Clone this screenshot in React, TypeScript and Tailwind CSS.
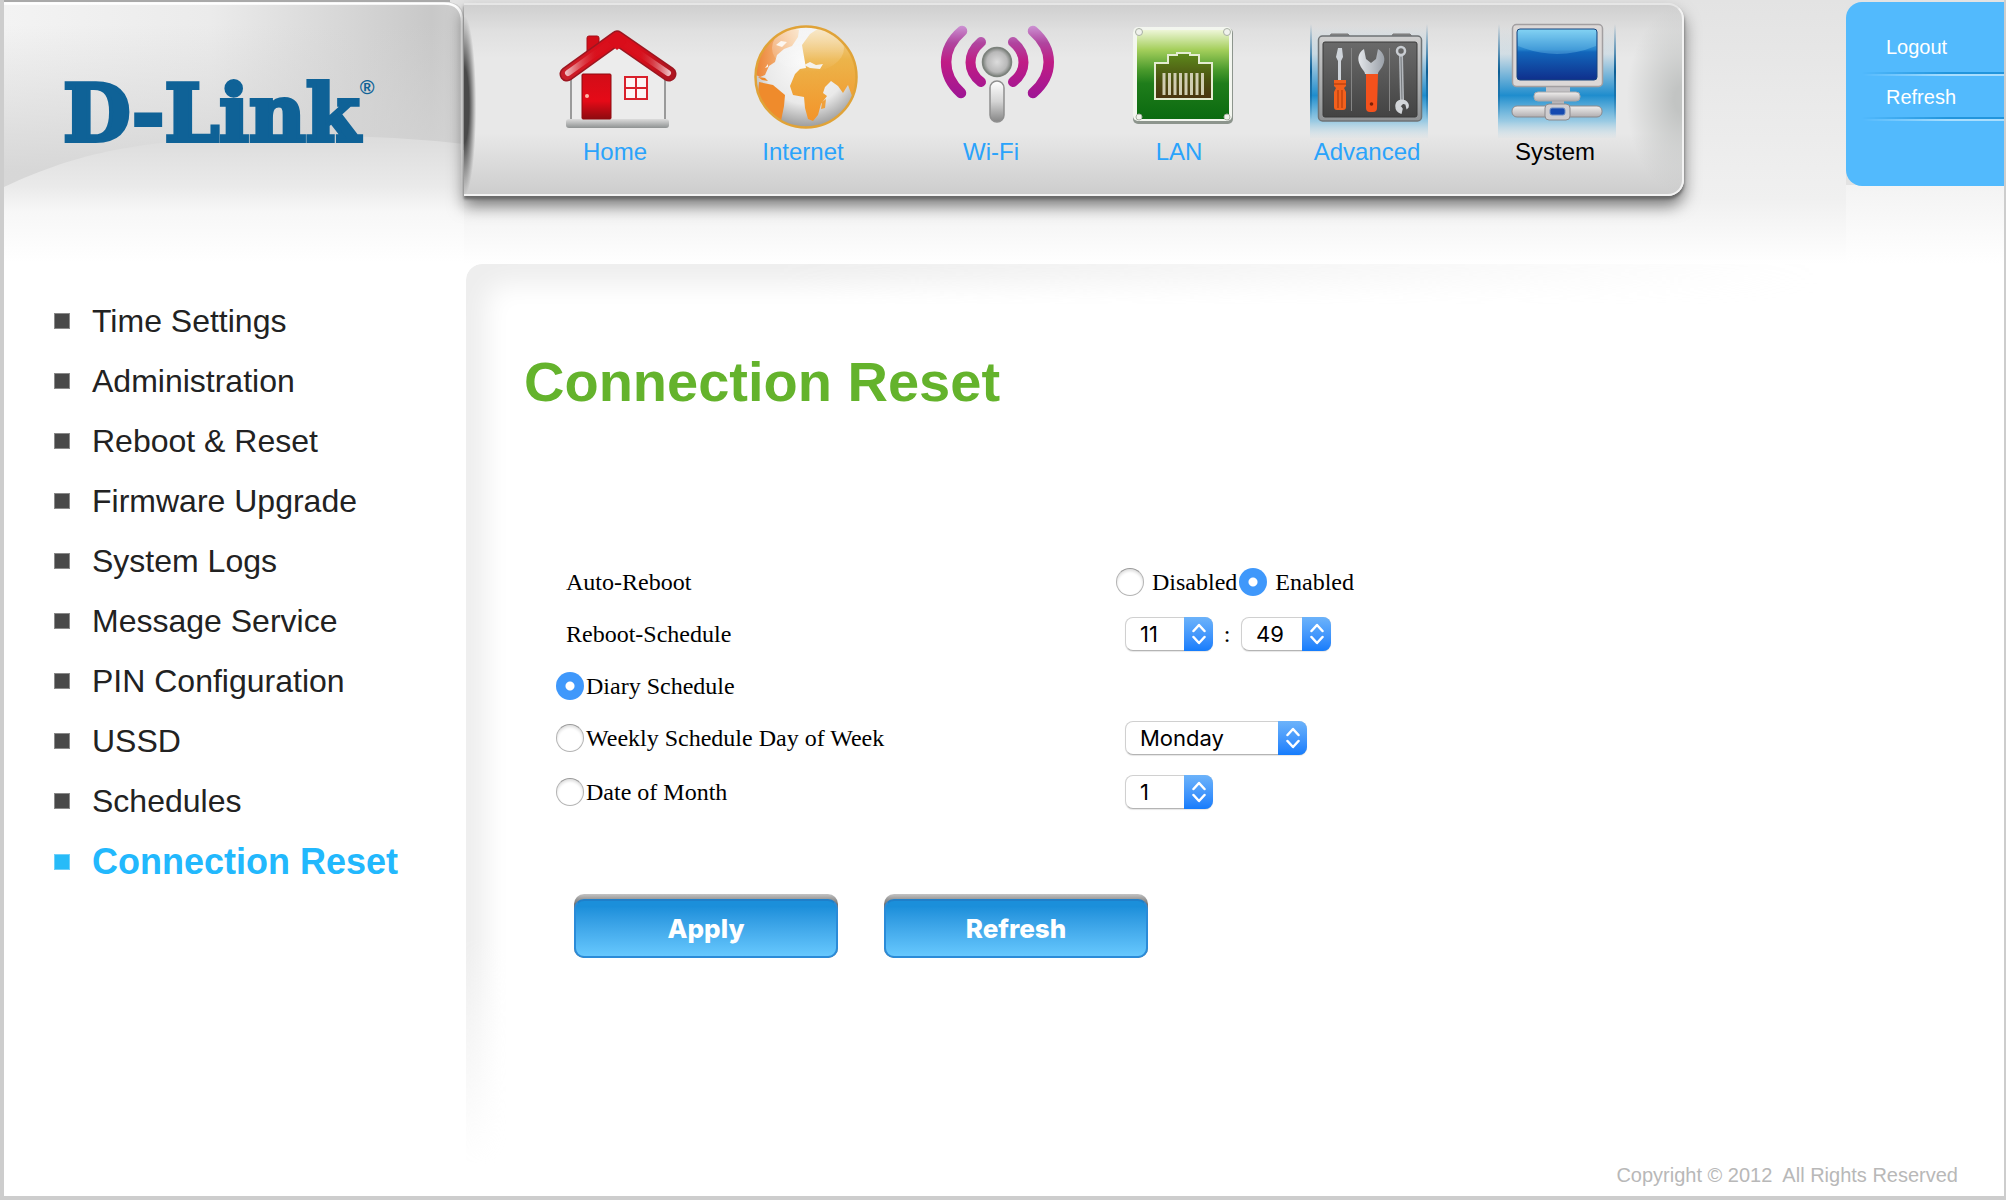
import { useState, type ReactNode } from "react";

function HomeIcon() {
  return (
    <svg viewBox="0 0 124 124" className="size-31" aria-hidden="true">
      <defs>
        <linearGradient id="homeRoof" x1="0" x2="1">
          <stop offset="0" stopColor="#c9202a" />
          <stop offset=".3" stopColor="#d90d1a" />
          <stop offset=".7" stopColor="#d90d1a" />
          <stop offset="1" stopColor="#b0141f" />
        </linearGradient>
        <linearGradient id="homeGlow" gradientUnits="userSpaceOnUse" x1="8" x2="112" y1="0" y2="0">
          <stop offset="0" stopColor="#eec0c2" />
          <stop offset=".28" stopColor="#dc1a26" stopOpacity=".3" />
          <stop offset=".5" stopColor="#dc1a26" stopOpacity="0" />
          <stop offset=".72" stopColor="#dc1a26" stopOpacity=".3" />
          <stop offset="1" stopColor="#eec0c2" />
        </linearGradient>
        <linearGradient id="homeDoor" x1="0" y1="0" x2="0" y2="1">
          <stop offset="0" stopColor="#d20d18" />
          <stop offset=".6" stopColor="#e50a17" />
          <stop offset="1" stopColor="#8e0a10" />
        </linearGradient>
        <linearGradient id="homeBase" x1="0" y1="0" x2="0" y2="1">
          <stop offset="0" stopColor="#dcdcdc" />
          <stop offset="1" stopColor="#8f9292" />
        </linearGradient>
      </defs>
      <path d="M12 62 59 30l49 32v44H12z" fill="#ececec" />
      <path d="M13 64v42M107 64v42" stroke="#9a9a9a" strokeWidth="2" />
      <rect x="8" y="105" width="103" height="9" rx="3" fill="url(#homeBase)" />
      <path d="M29 24q0-2 2-2h8q2 0 2 2v10l-12 8z" fill="#d20d18" stroke="#a50f18" />
      <path d="M9 60 59 24l52 36" fill="none" stroke="#9c1620" strokeWidth="15" strokeLinejoin="round" strokeLinecap="round" />
      <path d="M9 60 59 24l52 36" fill="none" stroke="url(#homeRoof)" strokeWidth="12" strokeLinejoin="round" strokeLinecap="round" />
      <path d="M10 59 59 24l51 35" fill="none" stroke="url(#homeGlow)" strokeWidth="6" strokeLinejoin="round" strokeLinecap="round" />
      <path d="M50 28l9-9 10 9-10 8z" fill="#d90d1a" />
      <rect x="24" y="60" width="29" height="45" rx="1" fill="url(#homeDoor)" stroke="#8e0a10" />
      <circle cx="29" cy="82" r="2" fill="#ffb9a8" />
      <rect x="67" y="63" width="22" height="22" fill="#fdf4f4" stroke="#d9202b" strokeWidth="2" />
      <path d="M78 63v22M67 74h22" stroke="#d9202b" strokeWidth="2" />
    </svg>
  );
}

function GlobeIcon() {
  return (
    <svg viewBox="0 0 124 124" className="size-31" aria-hidden="true">
      <defs>
        <radialGradient id="globeSea" cx=".5" cy=".35" r=".7">
          <stop offset="0" stopColor="#fbfbfb" />
          <stop offset=".6" stopColor="#e9e9e9" />
          <stop offset="1" stopColor="#8c8c8c" />
        </radialGradient>
        <linearGradient id="globeLand" x1="0" y1="0" x2="0" y2="1">
          <stop offset="0" stopColor="#f3d9a6" />
          <stop offset=".35" stopColor="#ecb44a" />
          <stop offset="1" stopColor="#f3942a" />
        </linearGradient>
        <linearGradient id="globeWest" x1="0" x2="1">
          <stop offset="0" stopColor="#ec8030" />
          <stop offset="1" stopColor="#f7d2a6" />
        </linearGradient>
        <linearGradient id="globeShine" x1="0" y1="0" x2="0" y2="1">
          <stop offset="0" stopColor="#fff" stopOpacity=".9" />
          <stop offset="1" stopColor="#fff" stopOpacity="0" />
        </linearGradient>
        <clipPath id="globeClip"><circle cx="60" cy="63" r="50" /></clipPath>
      </defs>
      <circle cx="60" cy="63" r="50" fill="url(#globeSea)" />
      <g clipPath="url(#globeClip)">
        <path d="M57 37l-1-6 8-11 12-8 24 6 14 30-1 30-7 4-4-11-5 8-5-7-7-5-6 6-2 6 4 3-6 8-3 11-5 6-5-2-3-11-1-11-11-2-3-9 5-12 5-5 6-1z" fill="url(#globeLand)" />
        <path d="M58 51l6-3 6 3 7-1-3 5-10-1z" fill="#f5f1ea" />
        <path d="M76 88l4-3-1 9-4 1z" fill="#f0a03a" />
        <path d="M8 60l1-22 14-18 16-8 14 4-1 7-6 9-8 3-7 6-2 7-6 4-4 9-5 2z" fill="url(#globeWest)" />
        <path d="M30 31l5-4 6 1-5 5zM22 50l-3 4 3-1z" fill="#fbf3ea" />
        <path d="M13 68l14 3 12 10-1 11-4 20-9-8-9-13-4-12z" fill="#ef8b2c" />
        <path d="M12 63l7 1 3 3-6-1z" fill="#ef8b2c" />
        <ellipse cx="62" cy="34" rx="36" ry="24" fill="url(#globeShine)" opacity=".55" />
      </g>
      <circle cx="60" cy="63" r="50.5" fill="none" stroke="#e0a338" strokeWidth="2.5" />
    </svg>
  );
}

function WifiIcon() {
  return (
    <svg viewBox="0 0 124 124" className="size-31" aria-hidden="true">
      <defs>
        <linearGradient id="wave" gradientUnits="userSpaceOnUse" x1="0" y1="10" x2="0" y2="86">
          <stop offset="0" stopColor="#cf9ad8" />
          <stop offset=".25" stopColor="#b0459f" />
          <stop offset=".5" stopColor="#c01c85" />
          <stop offset="1" stopColor="#9c1596" />
        </linearGradient>
        <radialGradient id="ball">
          <stop offset="0" stopColor="#dcdcdc" />
          <stop offset=".7" stopColor="#b9b9b9" />
          <stop offset="1" stopColor="#7a7f7a" />
        </radialGradient>
        <linearGradient id="stem" x1="0" y1="0" x2="0" y2="1">
          <stop offset="0" stopColor="#fff" />
          <stop offset=".5" stopColor="#d4d4d4" />
          <stop offset="1" stopColor="#858585" />
        </linearGradient>
      </defs>
      <g fill="none" stroke="url(#wave)" strokeLinecap="round">
        <path d="M28 17C7 35 7 61 27 79" strokeWidth="10.5" />
        <path d="M99 17c21 18 21 44 0 62" strokeWidth="10.5" />
        <path d="M47 28C33 40 33 57 47 68" strokeWidth="10" />
        <path d="M79 28c14 12 14 29 0 40" strokeWidth="10" />
      </g>
      <circle cx="63" cy="48" r="14.5" fill="url(#ball)" stroke="#7c827c" strokeWidth="1.5" />
      <rect x="56" y="67" width="14" height="41" rx="7" fill="url(#stem)" stroke="#8f8f8f" strokeWidth="1.5" />
    </svg>
  );
}

function LanIcon() {
  return (
    <svg viewBox="0 0 124 124" className="size-31" aria-hidden="true">
      <defs>
        <linearGradient id="lanPlate" x1="0" y1="0" x2="0" y2="1">
          <stop offset="0" stopColor="#eef6d8" />
          <stop offset=".22" stopColor="#a5cf5c" />
          <stop offset=".45" stopColor="#4a9a2c" />
          <stop offset=".6" stopColor="#1f7d1b" />
          <stop offset="1" stopColor="#0b6a10" />
        </linearGradient>
        <linearGradient id="lanPort" x1="0" y1="0" x2="0" y2="1">
          <stop offset="0" stopColor="#5d8a1c" />
          <stop offset=".6" stopColor="#4b4f10" />
          <stop offset="1" stopColor="#4a3410" />
        </linearGradient>
      </defs>
      <rect x="11" y="14" width="100" height="96" rx="5" fill="#8d958d" />
      <rect x="11" y="13" width="99" height="94" rx="5" fill="#f3f6ef" />
      <rect x="15" y="16" width="92" height="89" rx="2" fill="url(#lanPlate)" />
      <g fill="#f0f2ec" stroke="#a9b0a4">
        <circle cx="17" cy="18" r="3.5" /><circle cx="105" cy="18" r="3.5" />
        <circle cx="17" cy="103" r="3" /><circle cx="105" cy="103" r="3" />
      </g>
      <path d="M33 49h13v-8h9v-2h13v2h9v8h13v36H33z" fill="url(#lanPort)" stroke="#e4ecd2" strokeWidth="2" />
      <path d="M42 59v22M47.500 59v22M53 59v22M58.500 59v22M64 59v22M69.500 59v22M75 59v22M80.500 59v22" stroke="#cfcdb0" strokeWidth="3" />
    </svg>
  );
}

function BlueGlow({ id, full }: { id: string; full?: boolean }) {
  return (
    <>
      <defs>
        <linearGradient id={id} x1="0" y1="0" x2="0" y2="1">
          <stop offset="0" stopColor="#1488cc" stopOpacity="0" />
          <stop offset=".25" stopColor="#1488cc" stopOpacity={full ? ".1" : ".15"} />
          <stop offset=".62" stopColor="#1488cc" stopOpacity=".95" />
          <stop offset=".85" stopColor="#3aa5dc" stopOpacity=".45" />
          <stop offset="1" stopColor="#9fd0e8" stopOpacity=".05" />
        </linearGradient>
        <linearGradient id={id + "Edge"} x1="0" y1="0" x2="0" y2="1">
          <stop offset="0" stopColor="#0b5d94" stopOpacity="0" />
          <stop offset=".5" stopColor="#0b5d94" />
          <stop offset="1" stopColor="#0b5d94" stopOpacity="0" />
        </linearGradient>
      </defs>
      <rect x="0" y="12" width="118" height="112" fill={`url(#${id})`} />
      <rect x="0" y="10" width="2" height="96" fill={`url(#${id}Edge)`} />
      <rect x="116" y="10" width="2" height="96" fill={`url(#${id}Edge)`} />
    </>
  );
}

function ToolsIcon() {
  return (
    <svg viewBox="0 0 124 124" className="size-31" aria-hidden="true">
      <BlueGlow id="toolsGlow" />
      <defs>
        <linearGradient id="caseRim" x1="0" y1="0" x2="0" y2="1">
          <stop offset="0" stopColor="#cfcfcf" />
          <stop offset="1" stopColor="#8f9294" />
        </linearGradient>
        <linearGradient id="caseIn" x1="0" y1="0" x2="0" y2="1">
          <stop offset="0" stopColor="#6a6a6a" />
          <stop offset="1" stopColor="#434343" />
        </linearGradient>
        <linearGradient id="steel" x1="0" x2="1">
          <stop offset="0" stopColor="#e3e6ea" />
          <stop offset="1" stopColor="#9aa0a8" />
        </linearGradient>
      </defs>
      <path d="M19 24l2-4h17l3 4M81 24l2-4h17l3 4" fill="#8a8a8a" stroke="#777" />
      <rect x="8.500" y="22" width="103" height="85" rx="4" fill="url(#caseRim)" stroke="#6f7375" strokeWidth="1.500" />
      <rect x="13" y="28" width="94" height="75" rx="2" fill="url(#caseIn)" stroke="#3a3a3a" />
      <path d="M41.500 34v63M79.500 34v63" stroke="#858585" />
      <path d="M28 34h4l1 9-2 4v20h-3V47l-2-4z" fill="#cfd4da" />
      <path d="M24 66h12v6l-2 2 2 4v15q0 3-3 3h-6q-3 0-3-3V78l2-4-2-2z" fill="#f2601c" />
      <path d="M24 70h12M28 76v18M32 76v18" stroke="#c2430e" strokeWidth="1.500" />
      <path d="M54 35l2 10 5 4 5-4 2-10c6 4 8 10 5 16-2 5-5 6-5 9H55c0-3-3-4-5-9-3-6-2-12 4-16z" fill="url(#steel)" />
      <path d="M56 60h12l-1 34q0 4-4 4h-3q-4 0-4-4z" fill="#f4511c" />
      <circle cx="61.500" cy="90" r="1.800" fill="#7c2208" />
      <circle cx="91" cy="37" r="4" fill="none" stroke="#c9cdd2" strokeWidth="2.500" />
      <path d="M91 42l1 45" stroke="#b4b8bd" strokeWidth="4" />
      <path d="M91 43l1 43" stroke="#75797d" strokeWidth="1" />
      <path d="M95 87c-4-2-9 0-9 5 0 3 2 6 5 7l1-4-2-3 3-3 3 1 1 4 1-1c1-2-1-5-3-6z" fill="#d2d5d9" stroke="#d2d5d9" strokeWidth="1.500" />
    </svg>
  );
}

function SystemIcon() {
  return (
    <svg viewBox="0 0 124 124" className="size-31" aria-hidden="true">
      <BlueGlow id="sysGlow" full />
      <defs>
        <linearGradient id="screen" x1="0" y1="0" x2="0" y2="1">
          <stop offset="0" stopColor="#7fd0f2" />
          <stop offset=".4" stopColor="#2482cc" />
          <stop offset=".45" stopColor="#1266bb" />
          <stop offset="1" stopColor="#0f2f8c" />
        </linearGradient>
        <linearGradient id="sysBar" x1="0" y1="0" x2="0" y2="1">
          <stop offset="0" stopColor="#f1efee" />
          <stop offset="1" stopColor="#b1aeb0" />
        </linearGradient>
      </defs>
      <rect x="48" y="70" width="24" height="12" fill="#c3c1c4" />
      <rect x="54" y="84" width="12" height="10" fill="#b7b5b8" />
      <rect x="14.500" y="10.500" width="90" height="62" rx="4" fill="#dcd8d7" stroke="#a29fa1" strokeWidth="1.500" />
      <rect x="19" y="15" width="80" height="51" rx="3" fill="url(#screen)" stroke="#16457e" />
      <path d="M20 16h78v16q-39 16-78 0z" fill="#8fdcf8" opacity=".3" />
      <rect x="36" y="78" width="46" height="9" rx="4" fill="url(#sysBar)" stroke="#aaa8aa" />
      <rect x="14" y="92" width="90" height="11" rx="5" fill="url(#sysBar)" stroke="#8c8a8d" />
      <rect x="47" y="90" width="25" height="16" rx="4" fill="#cfcdd0" stroke="#8c8a8d" />
      <rect x="52" y="94" width="15" height="7" rx="2" fill="#1549b0" stroke="#6f8fc4" />
    </svg>
  );
}

const navItems: { label: string; icon: ReactNode; active?: boolean }[] = [
  { label: "Home", icon: <HomeIcon /> },
  { label: "Internet", icon: <GlobeIcon /> },
  { label: "Wi-Fi", icon: <WifiIcon /> },
  { label: "LAN", icon: <LanIcon /> },
  { label: "Advanced", icon: <ToolsIcon /> },
  { label: "System", icon: <SystemIcon />, active: true },
];

const menuItems = [
  "Time Settings",
  "Administration",
  "Reboot & Reset",
  "Firmware Upgrade",
  "System Logs",
  "Message Service",
  "PIN Configuration",
  "USSD",
  "Schedules",
];

function Radio(props: { id: string; name: string; checked: boolean; onChange: () => void }) {
  return (
    <input
      type="radio"
      {...props}
      className="m-0 size-7 shrink-0 appearance-none rounded-full border border-[#b4b4b4] border-t-[#9a9a9a] bg-white shadow-[inset_0_2px_3px_#00000022] checked:border-0 checked:bg-[radial-gradient(circle,#fff_0_4px,#3f98fb_5px)] checked:shadow-none"
    />
  );
}

function Select({ label, options, value, width }: { label: string; options: string[]; value: string; width: string }) {
  return (
    <span className={`relative inline-flex h-[34px] ${width}`}>
      <select
        aria-label={label}
        defaultValue={value}
        className="h-full w-full appearance-none rounded-lg border border-[#d0d0d0] border-b-[#b4b4b4] bg-white pl-3.5 font-[Inter,sans-serif] text-[22px] leading-8 text-black shadow-[0_1px_1px_#0000001a]"
      >
        {options.map((o) => (
          <option key={o}>{o}</option>
        ))}
      </select>
      <span className="pointer-events-none absolute inset-y-0 right-0 flex w-[29px] items-center justify-center rounded-r-lg bg-linear-to-b from-[#6cb3fa] to-[#147cfc]">
        <svg viewBox="0 0 14 22" className="h-[22px] w-3.5" fill="none" stroke="#fff" strokeWidth="2.500" strokeLinecap="round" strokeLinejoin="round" aria-hidden="true">
          <path d="M1.500 8 7 2l5.500 6M1.500 14 7 20l5.500-6" />
        </svg>
      </span>
    </span>
  );
}

function ActionButton({ children, type }: { children: ReactNode; type: "submit" | "reset" }) {
  return (
    <button
      type={type}
      className="h-16 w-66 rounded-[10px] bg-linear-to-b from-[#c4c4c4] to-[#777] to-15% pt-[5px]"
    >
      <span className="flex h-[59px] items-center justify-center rounded-[10px] border-2 border-[#2b8bd8] border-t-[#1f7fc9] bg-linear-to-b from-[#1b8fda] from-10% to-[#66c8fe] font-[Inter,sans-serif] text-[26px] font-extrabold text-white">
        {children}
      </span>
    </button>
  );
}

const hours = Array.from({ length: 24 }, (_, i) => String(i).padStart(2, "0"));
const minutes = Array.from({ length: 60 }, (_, i) => String(i).padStart(2, "0"));
const dates = Array.from({ length: 31 }, (_, i) => String(i + 1));
const days = ["Monday", "Tuesday", "Wednesday", "Thursday", "Friday", "Saturday", "Sunday"];

export default function App() {
  const [enabled, setEnabled] = useState(true);
  const [mode, setMode] = useState("daily");

  return (
    <div className="flex min-h-screen flex-col border-r-2 border-b-4 border-l-4 border-[#cdcdcd] bg-white font-['Liberation_Sans',Arial,sans-serif]">
      <header className="flex h-[264px] items-start bg-linear-to-b from-[#e3e3e3] via-[#f0f0f0] via-75% to-white">
        <div className="relative h-[264px] w-[460px] shrink-0 bg-white">
          <svg viewBox="0 0 460 264" preserveAspectRatio="none" className="absolute inset-0 h-full w-full" aria-hidden="true">
            <defs>
              <linearGradient id="cardX" x1="0" x2="1">
                <stop offset="0" stopColor="#f3f3f3" />
                <stop offset=".45" stopColor="#ebebeb" />
                <stop offset=".75" stopColor="#d6d6d6" />
                <stop offset=".93" stopColor="#c8c8c8" />
                <stop offset="1" stopColor="#d0d0d0" />
              </linearGradient>
              <linearGradient id="cardDim" x1="0" y1="0" x2="0" y2="1">
                <stop offset=".1" stopColor="#d4d4d4" stopOpacity="0" />
                <stop offset=".85" stopColor="#d4d4d4" stopOpacity=".9" />
              </linearGradient>
              <linearGradient id="cardLow" gradientUnits="userSpaceOnUse" x1="0" y1="136" x2="0" y2="262">
                <stop offset="0" stopColor="#dcdcdc" />
                <stop offset=".4" stopColor="#eaeaea" />
                <stop offset=".6" stopColor="#f7f7f7" />
                <stop offset="1" stopColor="#fff" />
              </linearGradient>
              <linearGradient id="cardEdge" x1="0" y1="0" x2="0" y2="1">
                <stop offset="0" stopColor="#fff" />
                <stop offset="1" stopColor="#fff" stopOpacity="0" />
              </linearGradient>
            </defs>
            <rect width="460" height="200" fill="#e4e4e4" />
            <path d="M0 2V0h446v2z" fill="#a9a9a9" />
            <path d="M0 2h442q18 0 18 18v180H0z" fill="url(#cardX)" />
            <path d="M0 5h440q18 0 18 18v177H0z" fill="url(#cardDim)" />
            <path d="M0 187C90 145 160 137 320 136q70 0 140 8v120H0z" fill="url(#cardLow)" />
            <path d="M0 3.500h440q18 0 18 18V150" fill="none" stroke="#fff" strokeWidth="2.500" />
            <path d="M457 150h3v62h-3z" fill="url(#cardEdge)" />
          </svg>
          <a
            href="#home"
            aria-label="D-Link"
            className="relative mt-[67px] ml-[59px] flex items-start font-['DejaVu_Serif',serif] text-[78px] leading-[94px] font-bold text-[#0f6297]"
          >
            <span className="[-webkit-text-stroke:4px_#0f6297]">D-Link</span>
            <span className="mt-2.5 font-['Liberation_Sans',sans-serif] text-xl leading-5 font-bold">®</span>
          </a>
        </div>

        <nav className="relative mt-[3px] h-[193px] w-[1220px] shrink-0 rounded-r-2xl border-t-2 border-r-2 border-b-2 border-[#f3f3f3] border-t-[#e6e6e6] bg-[linear-gradient(to_bottom,#cfcfcf,#e0e0e0_14%,#e8e8e8_28%,#e8e8e8_68%,#cdcdcd)] shadow-[0_3px_3px_#6a6a6a,0_10px_16px_#00000080]">
          <div className="pointer-events-none absolute inset-y-0 right-0 w-14 rounded-r-2xl bg-[radial-gradient(ellipse_at_right,#c2c4c3_10%,transparent_70%)]" />
          <div className="pointer-events-none absolute top-3 bottom-0 left-0 w-3 bg-[radial-gradient(ellipse_at_left,#4a4a4a_30%,transparent_72%)]" />
          <ul className="relative ml-[57px] flex">
            {navItems.map((item) => (
              <li key={item.label} className="w-47">
                <a
                  href={"#" + item.label}
                  className={`flex flex-col items-center pt-[9px] text-2xl leading-7 ${item.active ? "text-black" : "text-[#2aa3fb]"}`}
                >
                  <span className="pl-2.5">{item.icon}</span>
                  {item.label}
                </a>
              </li>
            ))}
          </ul>
        </nav>

        <div className="flex h-full min-w-0 flex-1 justify-end">
          <div className="w-[158px] bg-linear-to-b from-[#e3e3e3] from-70% via-[#f3f3f3] via-70% to-white">
            <div className="mt-0.5 h-[184px] rounded-l-2xl bg-[#52bafd] pl-4 text-xl leading-6 text-white">
              <a href="#logout" className="block h-[70px] pt-[33px] pl-6">Logout</a>
              <div className="h-1 border-t-2 border-b-2 border-t-[#2295dc] border-b-[#a9defe] mask-[linear-gradient(to_right,transparent,black_60%)]" />
              <a href="#refresh" className="block h-[41px] pt-[9px] pl-6">Refresh</a>
              <div className="h-1 border-t-2 border-b-2 border-t-[#2295dc] border-b-[#a9defe] mask-[linear-gradient(to_right,transparent,black_60%)]" />
            </div>
          </div>
        </div>
      </header>

      <div className="flex flex-1">
        <aside className="w-[462px] shrink-0 pt-[27px] pl-[50px]">
          <ul className="text-[32px] leading-[60px] text-[#222]">
            {menuItems.map((m) => (
              <li key={m}>
                <a href={"#" + m} className="flex items-center gap-[22px]">
                  <span className="size-4 border border-[#8a8a8a] bg-[#484848]" />
                  {m}
                </a>
              </li>
            ))}
            <li>
              <a href="#reset" aria-current="page" className="flex items-center gap-[22px] text-4xl leading-[62px] font-bold text-[#22b8fd]">
                <span className="size-4 border border-[#6fd0fa] bg-[#27bbf8]" />
                Connection Reset
              </a>
            </li>
          </ul>
        </aside>

        <main className="relative flex min-w-0 flex-1 flex-col">
          <div className="pointer-events-none absolute top-0 right-0 bottom-8 left-0 rounded-tl-2xl mask-[linear-gradient(to_right,black_20%,transparent_88%),linear-gradient(to_bottom,black_75%,transparent)] mask-intersect shadow-[inset_24px_24px_26px_-4px_#eeeeee]" />
          <div className="relative pt-[86px] pl-[58px]">
            <h1 className="text-[56px] leading-16 font-bold text-[#64b32c]">Connection Reset</h1>
          </div>

          <form
            className="relative mt-[142px] pl-[90px] font-['Liberation_Serif','Times_New_Roman',serif] text-2xl leading-7 text-black"
            onSubmit={(e) => e.preventDefault()}
          >
            <div className="flex h-[52px] items-center">
              <span className="w-[560px] pl-2.5">Auto-Reboot</span>
              <Radio id="off" name="auto" checked={!enabled} onChange={() => setEnabled(false)} />
              <label htmlFor="off" className="pr-0.5 pl-2">Disabled</label>
              <Radio id="on" name="auto" checked={enabled} onChange={() => setEnabled(true)} />
              <label htmlFor="on" className="pl-2">Enabled</label>
            </div>
            <div className="flex h-[52px] items-center">
              <span className="w-[569px] pl-2.5">Reboot-Schedule</span>
              <Select label="Hour" options={hours} value="11" width="w-[88px]" />
              <span className="w-7 text-center">:</span>
              <Select label="Minute" options={minutes} value="49" width="w-[90px]" />
            </div>
            <div className="flex h-[52px] items-center">
              <Radio id="daily" name="mode" checked={mode === "daily"} onChange={() => setMode("daily")} />
              <label htmlFor="daily" className="pl-0.5">Diary Schedule</label>
            </div>
            <div className="flex h-[52px] items-center">
              <div className="flex w-[569px] items-center">
                <Radio id="weekly" name="mode" checked={mode === "weekly"} onChange={() => setMode("weekly")} />
                <label htmlFor="weekly" className="pl-0.5">Weekly Schedule Day of Week</label>
              </div>
              <Select label="Day of week" options={days} value="Monday" width="w-[182px]" />
            </div>
            <div className="flex h-14 items-center">
              <div className="flex w-[569px] items-center">
                <Radio id="monthly" name="mode" checked={mode === "monthly"} onChange={() => setMode("monthly")} />
                <label htmlFor="monthly" className="pl-0.5">Date of Month</label>
              </div>
              <Select label="Date of month" options={dates} value="1" width="w-[88px]" />
            </div>
            <div className="mt-[74px] ml-[18px] flex gap-[46px]">
              <ActionButton type="submit">Apply</ActionButton>
              <ActionButton type="reset">Refresh</ActionButton>
            </div>
          </form>

          <footer className="relative mt-auto pr-[46px] pb-[9px] text-right text-xl leading-6 whitespace-pre text-[#b8b8b8]">
            {"Copyright © 2012  All Rights Reserved"}
          </footer>
        </main>
      </div>
    </div>
  );
}
